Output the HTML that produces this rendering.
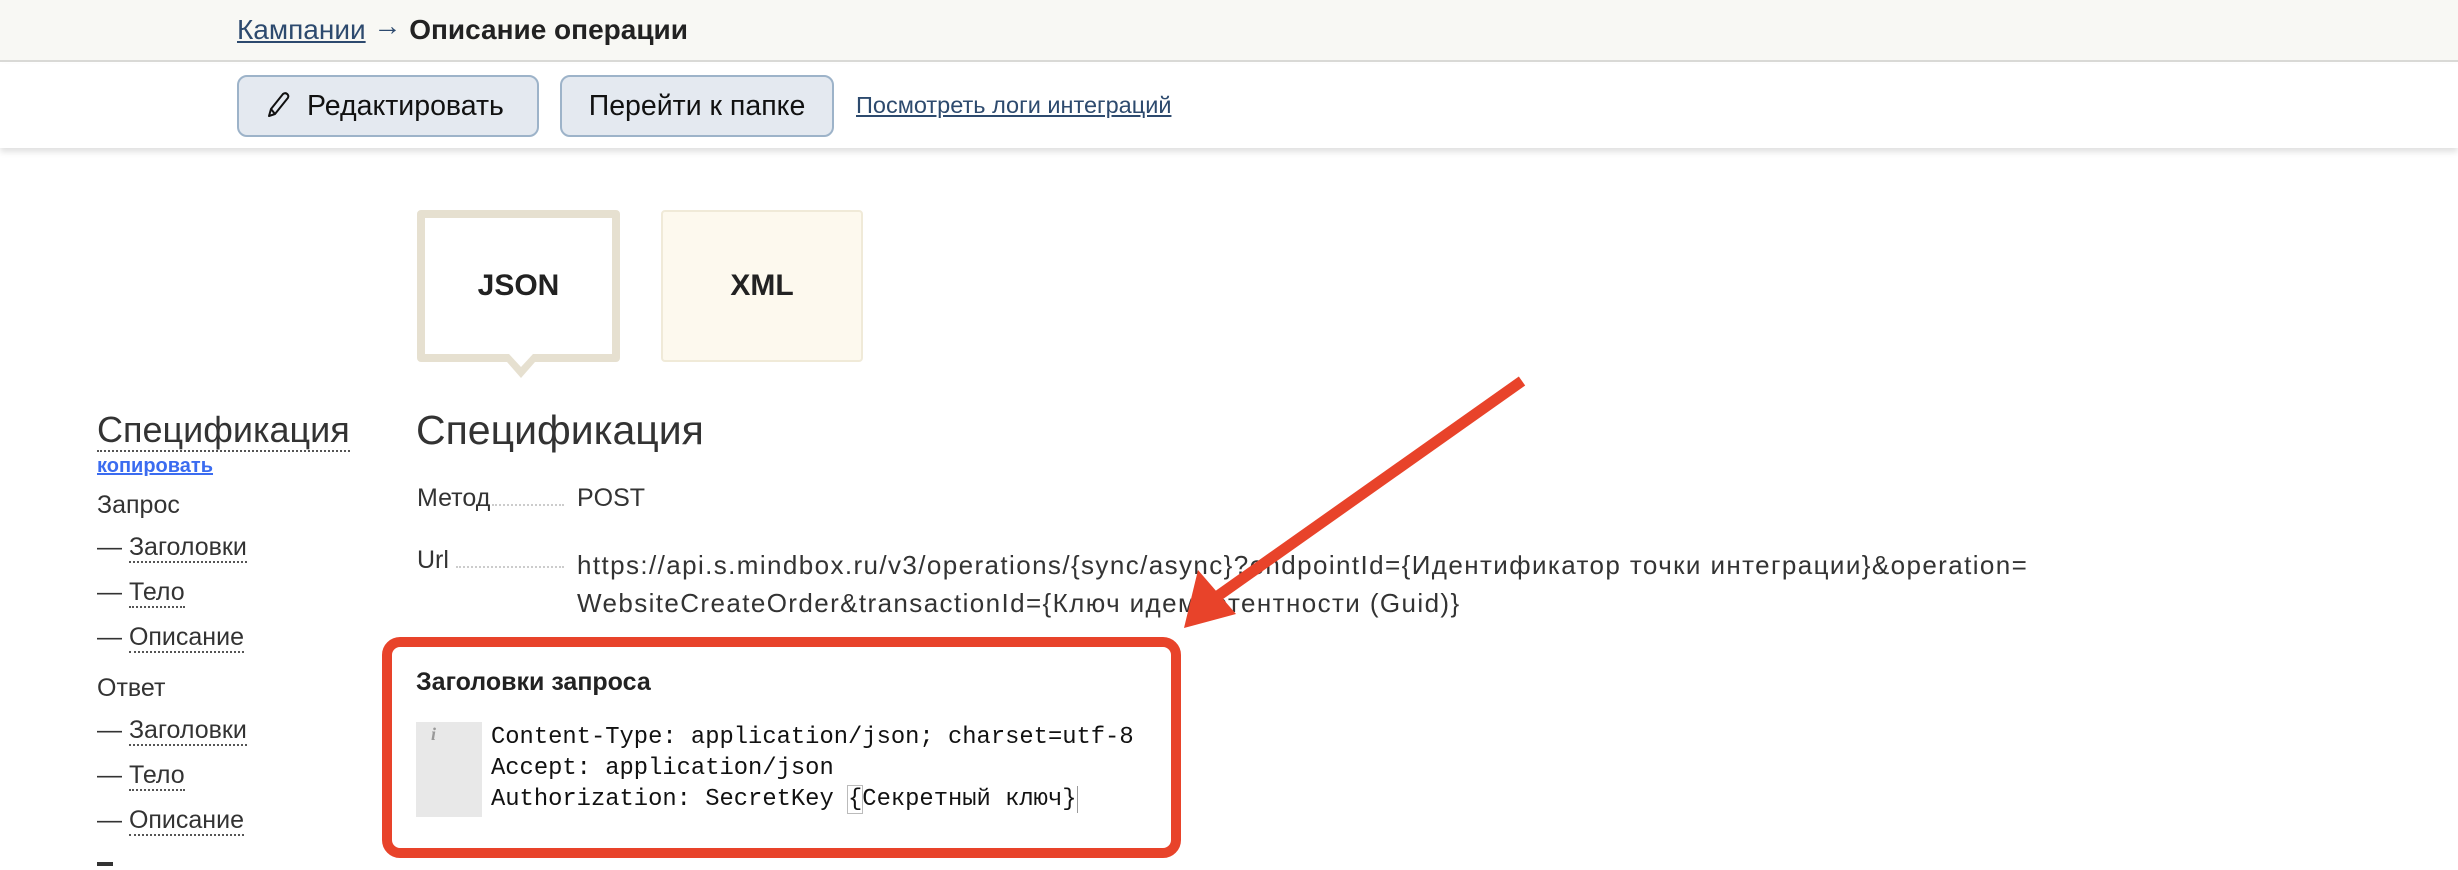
<!DOCTYPE html>
<html><head><meta charset="utf-8">
<style>
*{margin:0;padding:0;box-sizing:border-box}
body{width:2458px;height:870px;overflow:hidden;background:#fff;font-family:"Liberation Sans","Noto Sans CJK SC",sans-serif;color:#333;position:relative}
.a{position:absolute;white-space:nowrap}
.hdr{position:absolute;left:0;top:0;width:2458px;height:62px;background:#f8f8f4;border-bottom:2px solid #d9d9d6}
.tb{position:absolute;left:0;top:64px;width:2458px;height:84px;background:#fff;box-shadow:0 4px 6px rgba(0,0,0,.12)}
.btn{position:absolute;top:75px;height:62px;background:#e4e9f0;border:2px solid #9db3c9;border-radius:10px;font-size:28.5px;color:#111;line-height:58px}
.dl{border-bottom:2px dotted #555}
.nav{font-size:25px;color:#333}
.mono{font-family:"Liberation Mono",monospace;font-size:23.8px;color:#111}
</style></head><body>
<div class="hdr"></div>
<div class="a" style="left:237px;top:10px;font-size:28px;line-height:40px"><span style="color:#2d4a6e;text-decoration:underline">Кампании</span> <span style="color:#2d4a6e;position:relative;top:-4px">→</span> <b style="color:#222">Описание операции</b></div>
<div class="tb"></div>
<div class="btn" style="left:237px;width:302px;padding-left:26px"><svg width="26" height="30" viewBox="0 0 26 30" style="vertical-align:-5px;margin-right:16px"><path d="M4 26 L6 19 L18 4 Q21 2 23 5 Q24 7 22 9 L10 24 Z M6 19 L10 24" fill="none" stroke="#111" stroke-width="2" stroke-linejoin="round"/></svg>Редактировать</div>
<div class="btn" style="left:560px;width:274px;text-align:center">Перейти к папке</div>
<div class="a" style="left:856px;top:92px;font-size:23.5px;color:#2d4a6e;text-decoration:underline">Посмотреть логи интеграций</div>

<div class="a" style="left:417px;top:210px;width:203px;height:152px;border:8px solid #e6e0d0;border-radius:4px;background:#fff;font-weight:bold;font-size:30px;text-align:center;line-height:136px;color:#222">JSON</div>
<svg class="a" style="left:500px;top:354px" width="42" height="26"><polygon points="0,0 42,0 21,24" fill="#e6e0d0"/><polygon points="9,0 33,0 21,13" fill="#fff"/></svg>
<div class="a" style="left:661px;top:210px;width:202px;height:152px;border:2px solid #f0ead8;border-radius:4px;background:#fdf9ee;font-weight:bold;font-size:30px;text-align:center;line-height:148px;color:#222">XML</div>

<div class="a" style="left:97px;top:408px;font-size:36px;color:#333;line-height:44px"><span class="dl">Спецификация</span></div>
<div class="a" style="left:97px;top:455px;font-size:20px;font-weight:bold;color:#3b6cf0;text-decoration:underline">копировать</div>
<div class="a nav" style="left:97px;top:491px">Запрос</div>
<div class="a nav" style="left:97px;top:533px">— <span class="dl">Заголовки</span></div>
<div class="a nav" style="left:97px;top:578px">— <span class="dl">Тело</span></div>
<div class="a nav" style="left:97px;top:623px">— <span class="dl">Описание</span></div>
<div class="a nav" style="left:97px;top:674px">Ответ</div>
<div class="a nav" style="left:97px;top:716px">— <span class="dl">Заголовки</span></div>
<div class="a nav" style="left:97px;top:761px">— <span class="dl">Тело</span></div>
<div class="a nav" style="left:97px;top:806px">— <span class="dl">Описание</span></div>
<div class="a" style="left:97px;top:862px;width:16px;height:4px;background:#333"></div>

<div class="a" style="left:416px;top:407px;font-size:41px;color:#333">Спецификация</div>
<div class="a" style="left:417px;top:484px;font-size:25px">Метод</div>
<div class="a" style="left:492px;top:504px;width:72px;border-bottom:2px dotted #ccc"></div>
<div class="a" style="left:577px;top:484px;font-size:25px">POST</div>
<div class="a" style="left:417px;top:546px;font-size:25px">Url</div>
<div class="a" style="left:456px;top:566px;width:108px;border-bottom:2px dotted #ccc"></div>
<div class="a" style="left:577px;top:546px;font-size:26px;line-height:38px;letter-spacing:1.4px">https://api.s.mindbox.ru/v3/operations/{sync/async}?endpointId={Идентификатор точки интеграции}&amp;operation=<br>WebsiteCreateOrder&amp;transactionId={Ключ идемпотентности (Guid)}</div>

<div class="a" style="left:382px;top:637px;width:799px;height:221px;border:10px solid #e8432a;border-radius:18px"></div>
<div class="a" style="left:416px;top:668px;font-size:25px;font-weight:bold;color:#222">Заголовки запроса</div>
<div class="a" style="left:416px;top:722px;width:66px;height:95px;background:#e8e8e8"></div>
<div class="a" style="left:431px;top:724px;font-size:18px;color:#999;font-style:italic;font-weight:bold;font-family:'Liberation Serif',serif">i</div>
<div class="a mono" style="left:491px;top:722px;line-height:31px">Content-Type: application/json; charset=utf-8<br>Accept: application/json<br>Authorization: SecretKey <span style="outline:1px solid #bbb">{</span>Секретный ключ}<span style="border-right:1px solid #999"></span></div>

<svg class="a" style="left:0;top:0" width="2458" height="870"><line x1="1522" y1="381" x2="1215" y2="598" stroke="#e8432a" stroke-width="11"/><polygon points="1184,628 1198,570 1236,614" fill="#e8432a"/></svg>
</body></html>
